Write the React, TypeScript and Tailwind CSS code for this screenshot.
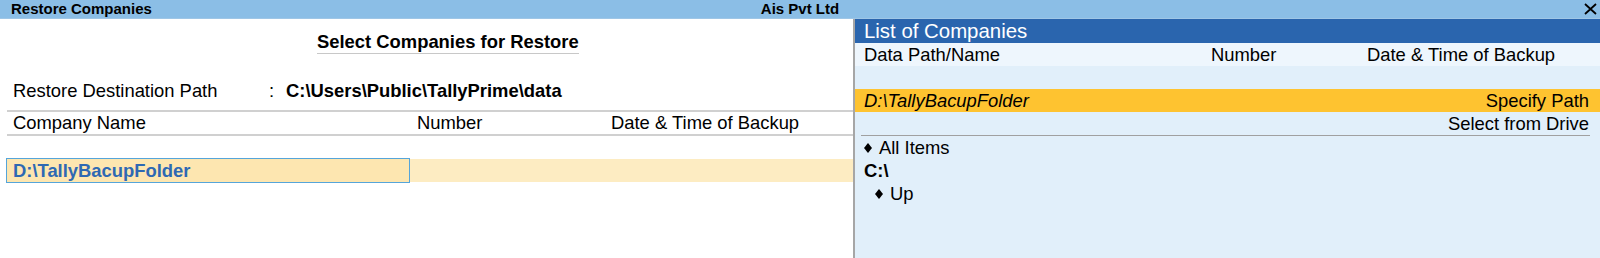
import React from "react";

function Diamond() {
  return (
    <svg width="8" height="10" viewBox="0 0 8 10" className="shrink-0">
      <polygon points="4,0 8,5 4,10 0,5" fill="#000" />
    </svg>
  );
}

export default function App() {
  return (
    <div
      className="flex h-[258px] w-[1600px] flex-col overflow-hidden bg-white text-black"
      style={{ fontFamily: '"Liberation Sans", Arial, sans-serif' }}
    >
      {/* title bar */}
      <div className="grid h-[19px] grid-cols-[1fr_auto_1fr] border-b border-[#9fc6e6] bg-[#8bbee6] text-[15px] font-bold leading-[18px]">
        <div className="pl-[11px]">Restore Companies</div>
        <div>Ais Pvt Ltd</div>
        <div className="flex items-center justify-end pr-[3px]">
          <svg width="13" height="12" viewBox="0 0 13 12">
            <path d="M1 1 L12 11 M12 1 L1 11" stroke="#000" strokeWidth="1.8" />
          </svg>
        </div>
      </div>

      <div className="flex flex-1">
        {/* left: restore form */}
        <div className="flex w-[853px] flex-col text-[18.4px]">
          <div className="mt-[12px] flex pl-[317px]">
            <div className="border-b border-[#c8c8c8] font-bold leading-[22px]">Select Companies for Restore</div>
          </div>

          <div className="mt-[25px] flex h-[23px] pl-[13px] leading-[23px]">
            <span className="w-[256px]">Restore Destination Path</span>
            <span className="w-[17px]">:</span>
            <span className="font-bold">C:\Users\Public\TallyPrime\data</span>
          </div>

          <div className="ml-[7px] mt-[8px] h-[2px] bg-[#d0d0d0]" />

          <div className="flex h-[22px] pl-[13px] leading-[22px]">
            <span className="w-[404px]">Company Name</span>
            <span className="w-[194px]">Number</span>
            <span>Date &amp; Time of Backup</span>
          </div>
          <div className="ml-[7px] h-[2px] bg-[#d0d0d0]" />

          <div className="ml-[6px] mt-[22px] flex h-[25px]">
            <div className="w-[404px] border border-[#55a5da] bg-[#fde6b0] pl-[6px] font-bold leading-[23px] text-[#2e69b3]">
              D:\TallyBacupFolder
            </div>
            <div className="my-px flex-1 bg-[#fdecc2]" />
          </div>
        </div>

        {/* right: list of companies */}
        <div className="flex flex-1 flex-col border-l-2 border-[#a6a6a6] bg-[#e1effa] text-[18.4px]">
          <div className="h-[24px] bg-[#2a65ae] pl-[9px] text-[20.4px] leading-[24px] text-white">List of Companies</div>
          <div className="flex h-[23px] bg-[#eef6fd] pl-[9px] leading-[23px]">
            <span className="w-[347px]">Data Path/Name</span>
            <span className="w-[156px]">Number</span>
            <span>Date &amp; Time of Backup</span>
          </div>
          <div className="h-[23px]" />
          <div className="flex h-[23px] justify-between bg-[#fec330] pl-[9px] pr-[11px] leading-[23px]">
            <span className="italic">D:\TallyBacupFolder</span>
            <span>Specify Path</span>
          </div>
          <div className="h-[23px] pr-[11px] text-right leading-[23px]">Select from Drive</div>
          <div className="ml-[6px] mr-[10px] h-px bg-[#a0a0a0]" />
          <div className="flex h-[23px] items-center gap-[7px] pl-[9px] leading-[23px]">
            <Diamond />
            <span>All Items</span>
          </div>
          <div className="h-[23px] pl-[9px] font-bold leading-[23px]">C:\</div>
          <div className="flex h-[23px] items-center gap-[7px] pl-[20px] leading-[23px]">
            <Diamond />
            <span>Up</span>
          </div>
        </div>
      </div>
    </div>
  );
}
